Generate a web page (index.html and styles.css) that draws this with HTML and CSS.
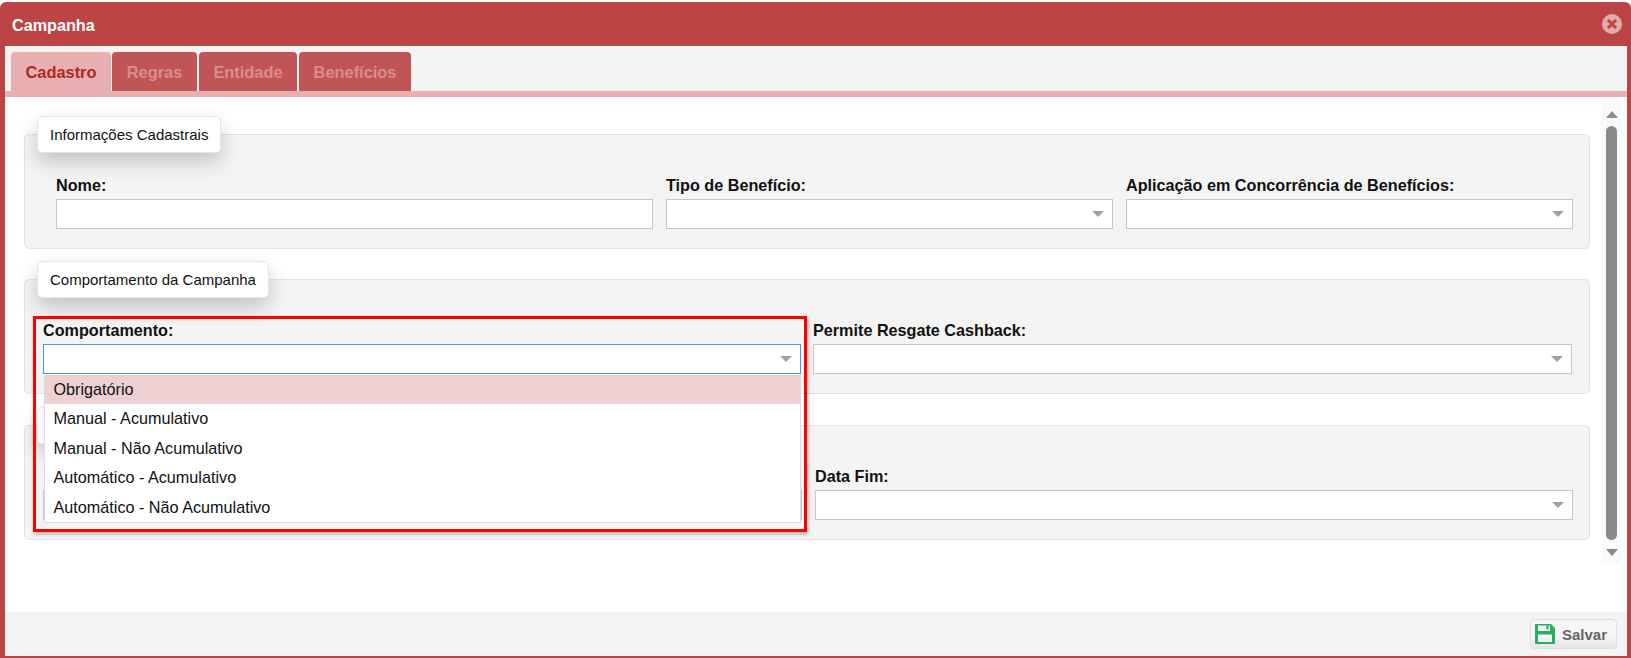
FILE: index.html
```html
<!DOCTYPE html>
<html lang="pt">
<head>
<meta charset="utf-8">
<title>Campanha</title>
<link rel="stylesheet" href="styles.css">
</head>
<body>
<div class="window">
  <header class="titlebar">
    <span class="title">Campanha</span>
    <span class="close"><svg viewBox="0 0 20 20" width="20" height="20"><circle cx="10" cy="10" r="10" fill="#e3aaaa"/><path d="M6 6l8 8M14 6l-8 8" stroke="#bd4444" stroke-width="3" fill="none"/></svg></span>
  </header>
  <div class="body">
    <nav class="tabs">
      <span class="tab active t1">Cadastro</span>
      <span class="tab t2">Regras</span>
      <span class="tab t3">Entidade</span>
      <span class="tab t4">Benefícios</span>
    </nav>
    <main class="content">
      <div class="form">
        <section class="group">
          <div class="legend">Informações Cadastrais</div>
          <div class="row row-three">
            <div class="field"><label>Nome:</label><div class="input"></div></div>
            <div class="field"><label>Tipo de Benefício:</label><div class="input select"><i class="caret"></i></div></div>
            <div class="field"><label>Aplicação em Concorrência de Benefícios:</label><div class="input select"><i class="caret"></i></div></div>
          </div>
        </section>
        <section class="group">
          <div class="legend">Comportamento da Campanha</div>
          <div class="row row-two">
            <div class="field">
              <label>Comportamento:</label>
              <div class="input select focus"><i class="caret"></i></div>
              <ul class="dropdown">
                <li class="hover">Obrigatório</li>
                <li>Manual - Acumulativo</li>
                <li>Manual - Não Acumulativo</li>
                <li>Automático - Acumulativo</li>
                <li>Automático - Não Acumulativo</li>
              </ul>
              <div class="highlight"></div>
            </div>
            <div class="field"><label>Permite Resgate Cashback:</label><div class="input select"><i class="caret"></i></div></div>
          </div>
        </section>
        <section class="group">
          <div class="legend legend-covered"></div>
          <div class="row row-dates">
            <div class="field"><label></label><div class="input select"></div></div>
            <div class="field"><label>Data Fim:</label><div class="input select"><i class="caret"></i></div></div>
          </div>
        </section>
      </div>
      <div class="scrollbar">
        <i class="arrow up"></i>
        <i class="thumb"></i>
        <i class="arrow down"></i>
      </div>
    </main>
    <footer class="footer">
      <button class="save" type="button">
        <svg viewBox="0 0 20 20" width="20" height="20"><path fill="#27ae60" fill-rule="evenodd" d="M1 0h15l4 4v15a1 1 0 0 1-1 1H1a1 1 0 0 1-1-1V1a1 1 0 0 1 1-1zM3 1.500v5.500h12V1.500h-1.500v4H11.500v-4zM3 10.500v7.500h14V10.500z"/></svg>
        <span>Salvar</span>
      </button>
    </footer>
  </div>
</div>
</body>
</html>
```
FILE: styles.css
```css
* { box-sizing: border-box; }
html, body { margin: 0; height: 100%; }
body {
  background: #fff;
  padding-top: 2px;
  font-family: "Liberation Sans", Arial, sans-serif;
  font-size: 15px;
  color: #111;
  overflow: hidden;
}
.window {
  height: 656px;
  background: #bd4444;
  border-radius: 6px 6px 0 0;
  padding: 0 4px 2px 5px;
  display: flex;
  flex-direction: column;
}
.titlebar {
  height: 44px;
  flex: none;
  display: flex;
  align-items: center;
  justify-content: space-between;
  padding: 3px 5px 0 7px;
}
.title { color: #fff; font-weight: bold; font-size: 16.200px; }
.close { display: flex; width: 20px; height: 20px; margin-top: -3px; }
.body { flex: 1; display: flex; flex-direction: column; background: #fff; min-height: 0; }
.tabs {
  height: 51px;
  flex: none;
  background: #f4f4f4;
  border-bottom: 6px solid #e8b0b0;
  padding: 6px 0 0 6px;
  display: flex;
  gap: 1px;
}
.tab {
  height: 39px;
  padding-top: 2px;
  display: flex;
  align-items: center;
  justify-content: center;
  border-radius: 4px 4px 0 0;
  background: #c15555;
  color: #dc8c8c;
  font-weight: bold;
  font-size: 16.400px;
}
.t1 { width: 100px; }
.t2 { width: 85px; }
.t3 { width: 98px; margin-left: 1px; }
.t4 { width: 112px; margin-left: 1px; }
.tab.active { background: #e8b0b0; color: #b22626; }
.content {
  flex: 1;
  min-height: 0;
  display: flex;
  padding: 6px 6px 0 19px;
}
.form { flex: 1; padding-top: 13px; min-width: 0; }
.group {
  position: relative;
  width: 1566px;
  height: 115px;
  margin-top: 18px;
  margin-bottom: 30px;
  background: #f4f4f4;
  border: 1px solid #e2e2e2;
  border-radius: 5px;
  padding: 39px 16px 0 31px;
}
.group:nth-child(2) { margin-bottom: 31px; }
.group:last-child { margin-bottom: 0; }
.legend {
  position: absolute;
  left: 12px;
  top: -19px;
  height: 37px;
  padding: 0 12px;
  display: flex;
  align-items: center;
  background: #fff;
  border: 1px solid #e6e6e6;
  border-radius: 5px;
  box-shadow: 0 9px 20px rgba(0, 0, 0, .2);
  font-size: 15px;
  color: #111;
}
.legend-covered { width: 190px; }
.row { display: grid; }
.row-three { grid-template-columns: 597px 447px 447px; column-gap: 13px; }
.row-two { margin-left: -13px; grid-template-columns: 758px 759px; column-gap: 12px; }
.row-dates { margin-left: -13px; grid-template-columns: 759px 758px; column-gap: 13px; }
.field { position: relative; min-width: 0; }
label {
  display: block;
  height: 25px;
  font-weight: bold;
  font-size: 16.200px;
  line-height: 22px;
  white-space: nowrap;
  color: #111;
}
.input {
  position: relative;
  height: 30px;
  background: #fff;
  border: 1px solid #c6c6c6;
}
.focus { border-color: #4b9ad8; }
.caret {
  position: absolute;
  right: 8px;
  top: 11px;
  width: 0;
  height: 0;
  border-left: 6px solid transparent;
  border-right: 6px solid transparent;
  border-top: 6px solid #a0a0a0;
}
.dropdown {
  position: absolute;
  left: 1px;
  right: 0;
  top: 56px;
  margin: 0;
  padding: 0;
  list-style: none;
  height: 148px;
  background: #fff;
  border: 1px solid #dcdcdc;
  border-top: 0;
  z-index: 3;
}
.dropdown li {
  height: 29.400px;
  padding-left: 8.500px;
  line-height: 29.400px;
  font-size: 16.200px;
  color: #111;
}
.dropdown .hover { background: #eed0d2; }
.highlight {
  position: absolute;
  left: -10px;
  top: -3px;
  width: 774px;
  height: 216px;
  border: 3px solid #f00;
  box-shadow: 1px 2px 4px rgba(0, 0, 0, .3);
  z-index: 4;
  pointer-events: none;
}
.scrollbar {
  flex: none;
  width: 19px;
  height: 461px;
  background: #fafafa;
  display: flex;
  flex-direction: column;
  align-items: center;
}
.thumb {
  flex: 1;
  width: 11px;
  background: #8a8a8a;
  border-radius: 6px;
  margin: 8px 0 9px;
}
.arrow { width: 0; height: 0; border-left: 6.500px solid transparent; border-right: 6.500px solid transparent; flex: none; }
.up { margin-top: 8px; border-bottom: 7px solid #8a8a8a; }
.down { margin-bottom: 8px; border-top: 7px solid #8a8a8a; }
.footer {
  height: 44px;
  flex: none;
  background: #f4f4f4;
  display: flex;
  justify-content: flex-end;
  align-items: flex-start;
  padding: 7px 10px 0 0;
}
.save {
  width: 87px;
  height: 30px;
  border: 1px solid #e0e0e0;
  border-radius: 4px;
  background: linear-gradient(#f6f6f6 0, #f6f6f6 55%, #e6e6e6 100%);
  display: flex;
  align-items: center;
  gap: 7px;
  padding: 0 4px;
  font-family: inherit;
  font-weight: bold;
  font-size: 15px;
  color: #666;
}
```
